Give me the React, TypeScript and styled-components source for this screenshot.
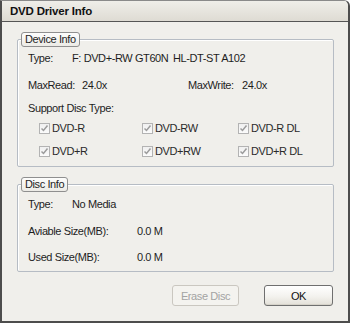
import React from 'react'
import styled, { createGlobalStyle } from 'styled-components'

const GlobalStyle = createGlobalStyle`
  html, body {
    margin: 0;
    padding: 0;
    background: #ffffff;
  }
`

const Window = styled.div`
  box-sizing: border-box;
  width: 350px;
  height: 323px;
  display: flex;
  flex-direction: column;
  background: #f0efeb;
  border: 2px solid #4d4d4d;
  border-top: 1px solid #8a8a8a;
  border-top-right-radius: 6px;
  overflow: hidden;
  font-family: 'Liberation Sans', Arial, sans-serif;
  font-size: 11px;
  letter-spacing: -0.4px;
  color: #1e1e1e;
`

const TitleBar = styled.div`
  height: 20px;
  flex: none;
  display: flex;
  align-items: center;
  padding-left: 8px;
  background: linear-gradient(#efeee9, #dedbd3);
  border-bottom: 1px solid #555555;
  font-weight: bold;
  font-size: 11.5px;
  letter-spacing: -0.2px;
  color: #111111;
`

const Body = styled.div`
  flex: 1;
  display: flex;
  flex-direction: column;
  padding: 17px 14px 0 15px;
`

const Group = styled.div<{ $top?: number }>`
  position: relative;
  margin-top: ${({ $top }) => $top ?? 0}px;
  border: 1px solid #b6bcc4;
  box-shadow: inset 1px 1px 0 #ffffff;
  border-radius: 2px;
  padding: 0 10px;
  display: flex;
  flex-direction: column;
`

const Legend = styled.div`
  position: absolute;
  left: 3px;
  top: -8px;
  height: 13px;
  line-height: 13px;
  padding: 0 3px;
  border: 1px solid #8f8f8f;
  border-radius: 3px;
  background: linear-gradient(#fdfdfc, #ecebe6);
  color: #1e1e1e;
`

const Row = styled.div<{ $top: number; $indent?: number }>`
  height: 20px;
  margin-top: ${({ $top }) => $top}px;
  padding-left: ${({ $indent }) => $indent ?? 0}px;
  display: flex;
  align-items: center;
  white-space: nowrap;
`

const Cell = styled.span<{ $w?: number }>`
  display: inline-block;
  width: ${({ $w }) => ($w ? `${$w}px` : 'auto')};
  flex: none;
`

const CheckItem = styled.label<{ $w?: number }>`
  display: flex;
  align-items: center;
  gap: 2px;
  width: ${({ $w }) => ($w ? `${$w}px` : 'auto')};
  flex: none;
  color: #2a2a2a;
`

const Box = styled.span`
  box-sizing: border-box;
  width: 11px;
  height: 11px;
  border: 1px solid #b3b3b3;
  background: linear-gradient(#f0f0f0, #fbfbfb);
  display: flex;
  align-items: center;
  justify-content: center;
`

const ButtonBar = styled.div`
  margin-top: 13px;
  display: flex;
  justify-content: flex-end;
  gap: 25px;
  padding-right: 1px;
`

const Button = styled.button<{ $w: number }>`
  box-sizing: border-box;
  width: ${({ $w }) => $w}px;
  height: 21px;
  padding: 0;
  border-radius: 3px;
  font-family: 'Liberation Sans', Arial, sans-serif;
  font-size: 11px;
  letter-spacing: -0.4px;
  border: 1px solid ${({ disabled }) => (disabled ? '#cac7c0' : '#6f6f6f')};
  background: ${({ disabled }) =>
    disabled ? '#f4f3ef' : 'linear-gradient(#ffffff, #f3f2ee 55%, #e3e0d8)'};
  color: ${({ disabled }) => (disabled ? '#a3a3a3' : '#111111')};
  box-shadow: ${({ disabled }) => (disabled ? 'none' : 'inset 0 -1px 0 #d6d3ca')};
`

function Check({ label, w }: { label: string; w?: number }) {
  return (
    <CheckItem $w={w}>
      <Box>
        <svg width="9" height="9" viewBox="0 0 9 9">
          <polyline points="1.5,4.5 3.5,6.5 7.5,1.5" fill="none" stroke="#9c9c9c" strokeWidth="1.5" />
        </svg>
      </Box>
      {label}
    </CheckItem>
  )
}

export default function App() {
  return (
    <>
      <GlobalStyle />
      <Window>
        <TitleBar>DVD Driver Info</TitleBar>
        <Body>
          <Group>
            <Legend>Device Info</Legend>
            <Row $top={8}>
              <Cell $w={44}>Type:</Cell>
              <Cell $w={101}>F: DVD+-RW GT60N</Cell>
              <Cell>HL-DT-ST A102</Cell>
            </Row>
            <Row $top={7}>
              <Cell $w={54}>MaxRead:</Cell>
              <Cell $w={106}>24.0x</Cell>
              <Cell $w={54}>MaxWrite:</Cell>
              <Cell>24.0x</Cell>
            </Row>
            <Row $top={3}>Support Disc Type:</Row>
            <Row $top={0} $indent={11}>
              <Check label="DVD-R" w={103} />
              <Check label="DVD-RW" w={96} />
              <Check label="DVD-R DL" />
            </Row>
            <Row $top={3} $indent={11}>
              <Check label="DVD+R" w={103} />
              <Check label="DVD+RW" w={96} />
              <Check label="DVD+R DL" />
            </Row>
            <Row $top={5} style={{ height: 0 }} />
          </Group>
          <Group $top={17}>
            <Legend>Disc Info</Legend>
            <Row $top={9}>
              <Cell $w={44}>Type:</Cell>
              <Cell>No Media</Cell>
            </Row>
            <Row $top={7}>
              <Cell $w={109}>Aviable Size(MB):</Cell>
              <Cell>0.0 M</Cell>
            </Row>
            <Row $top={6}>
              <Cell $w={109}>Used Size(MB):</Cell>
              <Cell>0.0 M</Cell>
            </Row>
            <Row $top={4} style={{ height: 0 }} />
          </Group>
          <ButtonBar>
            <Button $w={67} disabled>
              Erase Disc
            </Button>
            <Button $w={69}>OK</Button>
          </ButtonBar>
        </Body>
      </Window>
    </>
  )
}
